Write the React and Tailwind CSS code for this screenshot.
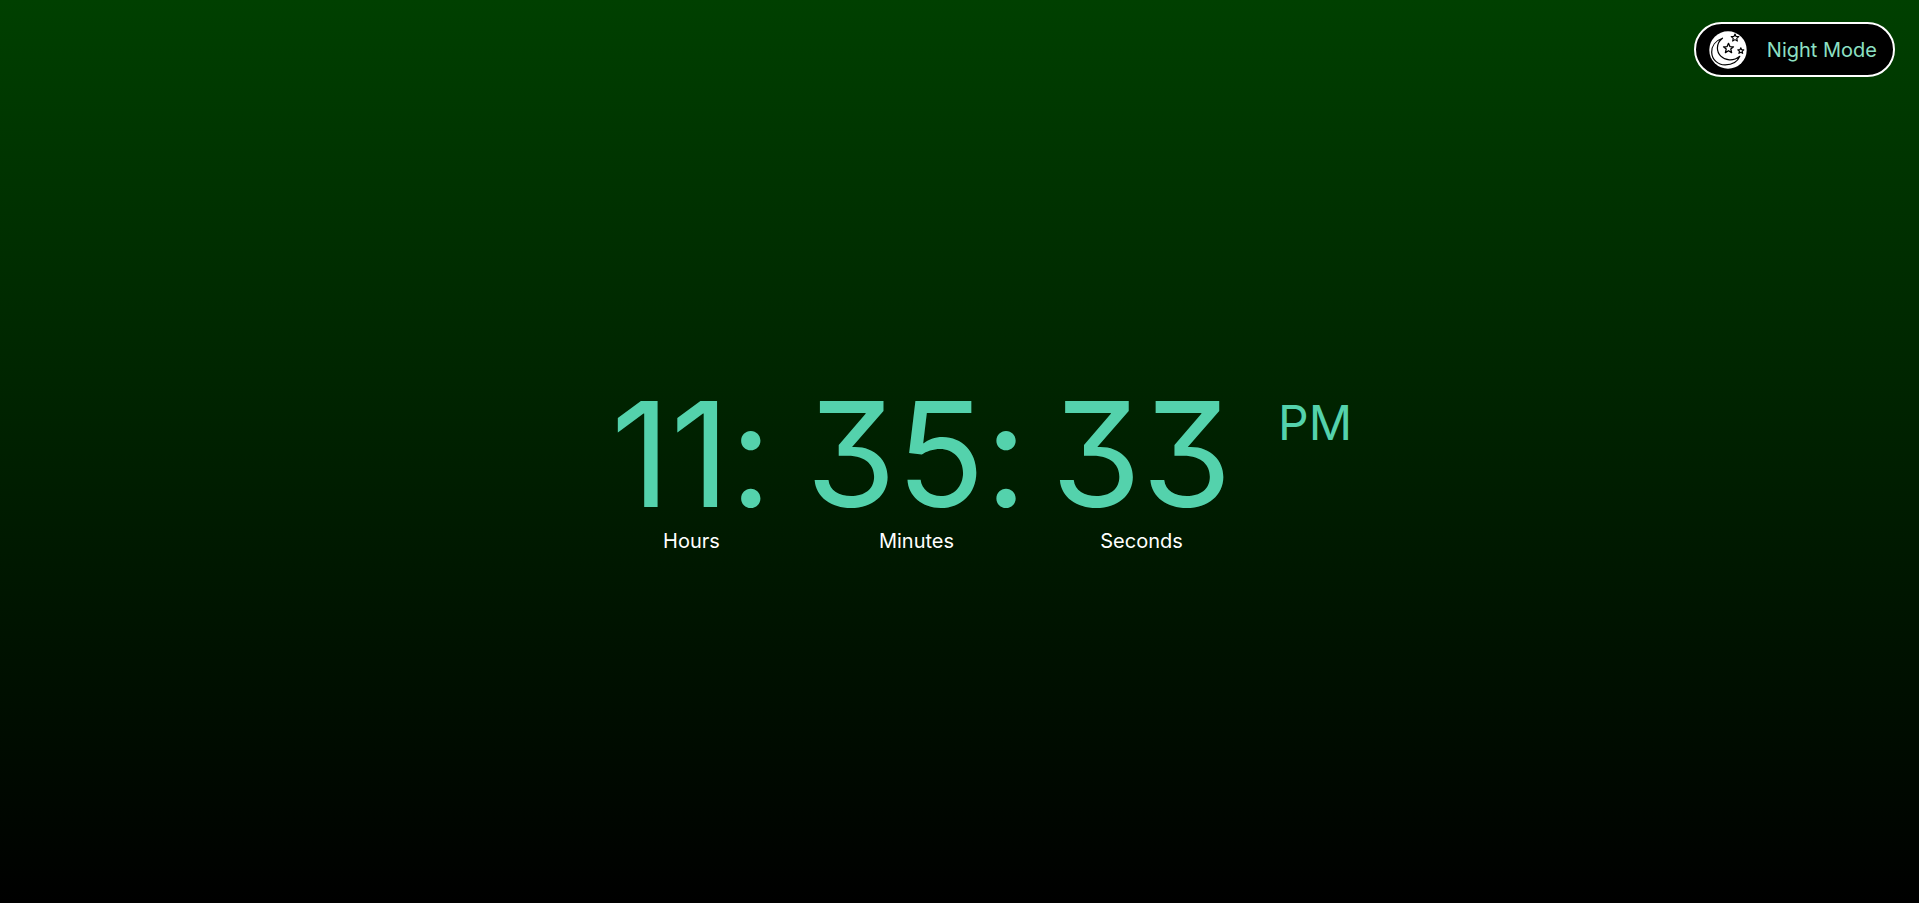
import React from "react";

const units = [
  { label: "Hours", value: "11:" },
  { label: "Minutes", value: "35:" },
  { label: "Seconds", value: "33" },
];

function MoonIcon() {
  const star = "M0-5 1.4-1.7 5-1.5 2.3.8 3.1 4.3 0 2.4-3.1 4.3-2.3.8-5-1.5-1.4-1.7Z";
  return (
    <svg viewBox="0 0 38 38" className="size-[38px] shrink-0" aria-hidden="true">
      <circle cx="19" cy="19" r="18.7" fill="#fff" />
      <g fill="none" stroke="#000" strokeLinejoin="round">
        <path
          d="M13.500 7.200C6.500 9.500 2.600 15 2.700 21.200c.2 7.500 6.300 12.800 13.500 12.700 6.800-.1 12.300-3 14.600-8.600-3.300 2.700-6.500 3.900-10.500 3.600C13.500 28.400 8.400 23.300 8.400 17c0-4 1.700-7.300 5.100-9.800Z"
          strokeWidth="1.2"
        />
        <path d={star} transform="translate(19.500 17.300)" strokeWidth="1.3" />
        <path d={star} transform="translate(26 6.800) scale(.76)" strokeWidth="1.5" />
        <path d={star} transform="translate(31.800 19.800) scale(.6)" strokeWidth="1.9" />
      </g>
    </svg>
  );
}

export default function App() {
  return (
    <div className="relative flex min-h-screen flex-col bg-linear-to-b/srgb from-[#004000] to-black font-['Inter',sans-serif]">
      <header className="absolute top-0 right-0 px-6 py-[22px]">
        <button
          type="button"
          className="flex h-[55px] items-center gap-5 rounded-[28px] border-2 border-white bg-black pr-4 pl-[13px] text-xl text-[#8de0c4]"
        >
          <MoonIcon />
          Night Mode
        </button>
      </header>
      <main className="flex flex-1 items-center justify-center pt-7 pl-3">
        {units.map((unit) => (
          <section key={unit.label} className="flex w-[225px] flex-col items-center">
            <div className="text-[146px] leading-[150px] text-[#54d2ac] [font-feature-settings:'cv09','calt'_0]">
              {unit.value}
            </div>
            <div className="text-xl/6 text-white">{unit.label}</div>
          </section>
        ))}
        <div className="pb-[86px] pl-6 text-5xl text-[#54d2ac]">PM</div>
      </main>
    </div>
  );
}
